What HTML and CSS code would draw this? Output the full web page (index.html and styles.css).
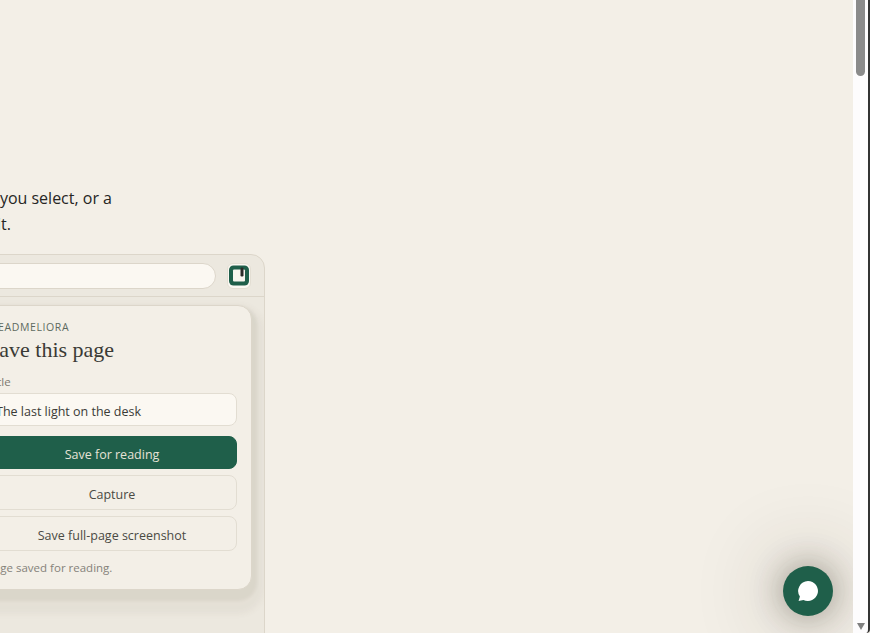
FILE: index.html
```html
<!DOCTYPE html>
<html lang="en">
<head>
<meta charset="utf-8">
<title>Readmeliora</title>
<link rel="stylesheet" href="styles.css">
</head>
<body>
<div class="window">
  <main class="page">
    <div class="stage">
      <p class="lead"><span class="lead-line">Save the article, only the passage you select, or a</span><span class="lead-line lead-last">full-page picture of it.</span></p>
      <section class="browser">
        <div class="toolbar">
          <div class="address"></div>
          <button class="ext" aria-label="Readmeliora">
            <svg viewBox="0 0 20 20" width="20" height="21"><rect x="0" y="0" width="20" height="20" rx="4.5" fill="#1f5f4a"/><rect x="4" y="4" width="12" height="12" rx="1" fill="#f8f5ee"/><rect x="11.5" y="2" width="3" height="9" rx="1.2" fill="#2a2a28"/></svg>
          </button>
        </div>
        <div class="viewport">
          <div class="popup">
            <div class="brand">READMELIORA</div>
            <h2 class="popup-title">Save this page</h2>
            <label class="field-label">Title</label>
            <div class="field">The last light on the desk</div>
            <button class="btn btn-primary">Save for reading</button>
            <button class="btn">Capture</button>
            <button class="btn">Save full-page screenshot</button>
            <p class="note">Page saved for reading.</p>
          </div>
        </div>
      </section>
    </div>
    <button class="fab" aria-label="Chat">
      <svg viewBox="0 0 24 24" width="24" height="24"><path d="M12 2a10 10 0 1 1-4.6 18.9L2.6 22l1.3-4.4A10 10 0 0 1 12 2z" fill="#fff"/></svg>
    </button>
  </main>
  <aside class="scrollbar">
    <div class="thumb"></div>
    <div class="arrow"></div>
  </aside>
</div>
</body>
</html>
```

FILE: styles.css
```css
* { box-sizing: border-box; }
html, body { margin: 0; height: 100%; overflow: hidden; }
body { font-family: "Open Sans", "Noto Sans", sans-serif; background: #f3efe7; color: #2f2f2b; }
.window { display: flex; height: 633px; }
.page { flex: 1; min-width: 0; overflow: hidden; background: #f3efe7; }
.stage { width: 565px; margin-left: -300px; padding-top: 185px; }

.lead { margin: 0 0 17px; font-size: 16px; line-height: 26px; text-align: right; white-space: nowrap; width: 412px; color: #262624; }
.lead-line { display: block; }
.lead-last { padding-right: 101px; }

.browser { height: 420px; background: #ece8df; border: 1px solid #dcd6ca; border-radius: 14px 14px 0 0; overflow: hidden; }
.toolbar { display: flex; align-items: center; gap: 11px; height: 42px; padding: 0 13px 0 10px; border-bottom: 1px solid #dcd6ca; }
.address { flex: 1; height: 26px; background: #fbf8f2; border: 1px solid #dcd6ca; border-radius: 13px; }
.ext { display: flex; align-items: center; justify-content: center; width: 24px; height: 26px; padding: 0; background: #fbf8f2; border: 1px solid #e3ded3; border-radius: 6px; }

.viewport { display: flex; justify-content: flex-end; padding: 8px 12px 0 0; }
.popup { width: 280px; height: 285px; padding: 14px 14px 0; background: #f3efe7; border: 1px solid #dcd6ca; border-radius: 14px; box-shadow: 0 6px 3px 5px rgba(90,80,60,.07), 0 12px 6px 12px rgba(90,80,60,.05); }
.brand { padding-left: 4px; font-size: 10.5px; line-height: 15px; letter-spacing: 0.6px; color: #5d6a60; }
.popup-title { margin: 1px 0 0; font-family: "Liberation Serif", serif; font-weight: 400; font-size: 22px; line-height: 28px; color: #3a3a36; }
.field-label { display: block; margin-top: 10px; padding-left: 1px; font-size: 11.5px; line-height: 16px; color: #7d7a70; }
.field { height: 33px; margin-top: 3px; padding: 2px 8px 0; font-size: 12.5px; line-height: 31px; color: #3a3a36; background: #fbf8f2; border: 1px solid #e2ddd2; border-radius: 8px; }
.btn { display: block; width: 100%; height: 35px; margin-top: 6px; padding: 3px 0 0; font: 12.5px "Open Sans", "Noto Sans", sans-serif; color: #4a4a44; text-align: center; background: #f3efe7; border: 1px solid #e2ddd2; border-radius: 8px; }
.btn-primary { height: 33px; margin-top: 10px; color: #e6e2d6; background: #1f5f4a; border-color: #1f5f4a; }
.note { margin: 9px 0 0; font-size: 11.5px; line-height: 16px; color: #85827a; }

.fab { position: fixed; left: 783px; top: 566px; display: flex; align-items: center; justify-content: center; width: 50px; height: 50px; padding: 0; background: #1f5f4a; border: 0; border-radius: 50%; box-shadow: 0 0 30px 4px rgba(50,40,25,.3), 0 0 80px 20px rgba(50,40,25,.14); }

.scrollbar { position: relative; flex: 0 0 17px; background: #fdfcfd; border-right: 2px solid #333; border-bottom-right-radius: 4px; }
.thumb { width: 9px; height: 76px; margin-left: 3px; background: #8b8b8b; border-radius: 0 0 5px 5px; }
.arrow { position: absolute; left: 4px; bottom: 3px; width: 0; height: 0; border-left: 4px solid transparent; border-right: 4px solid transparent; border-top: 7px solid #808080; }
```
